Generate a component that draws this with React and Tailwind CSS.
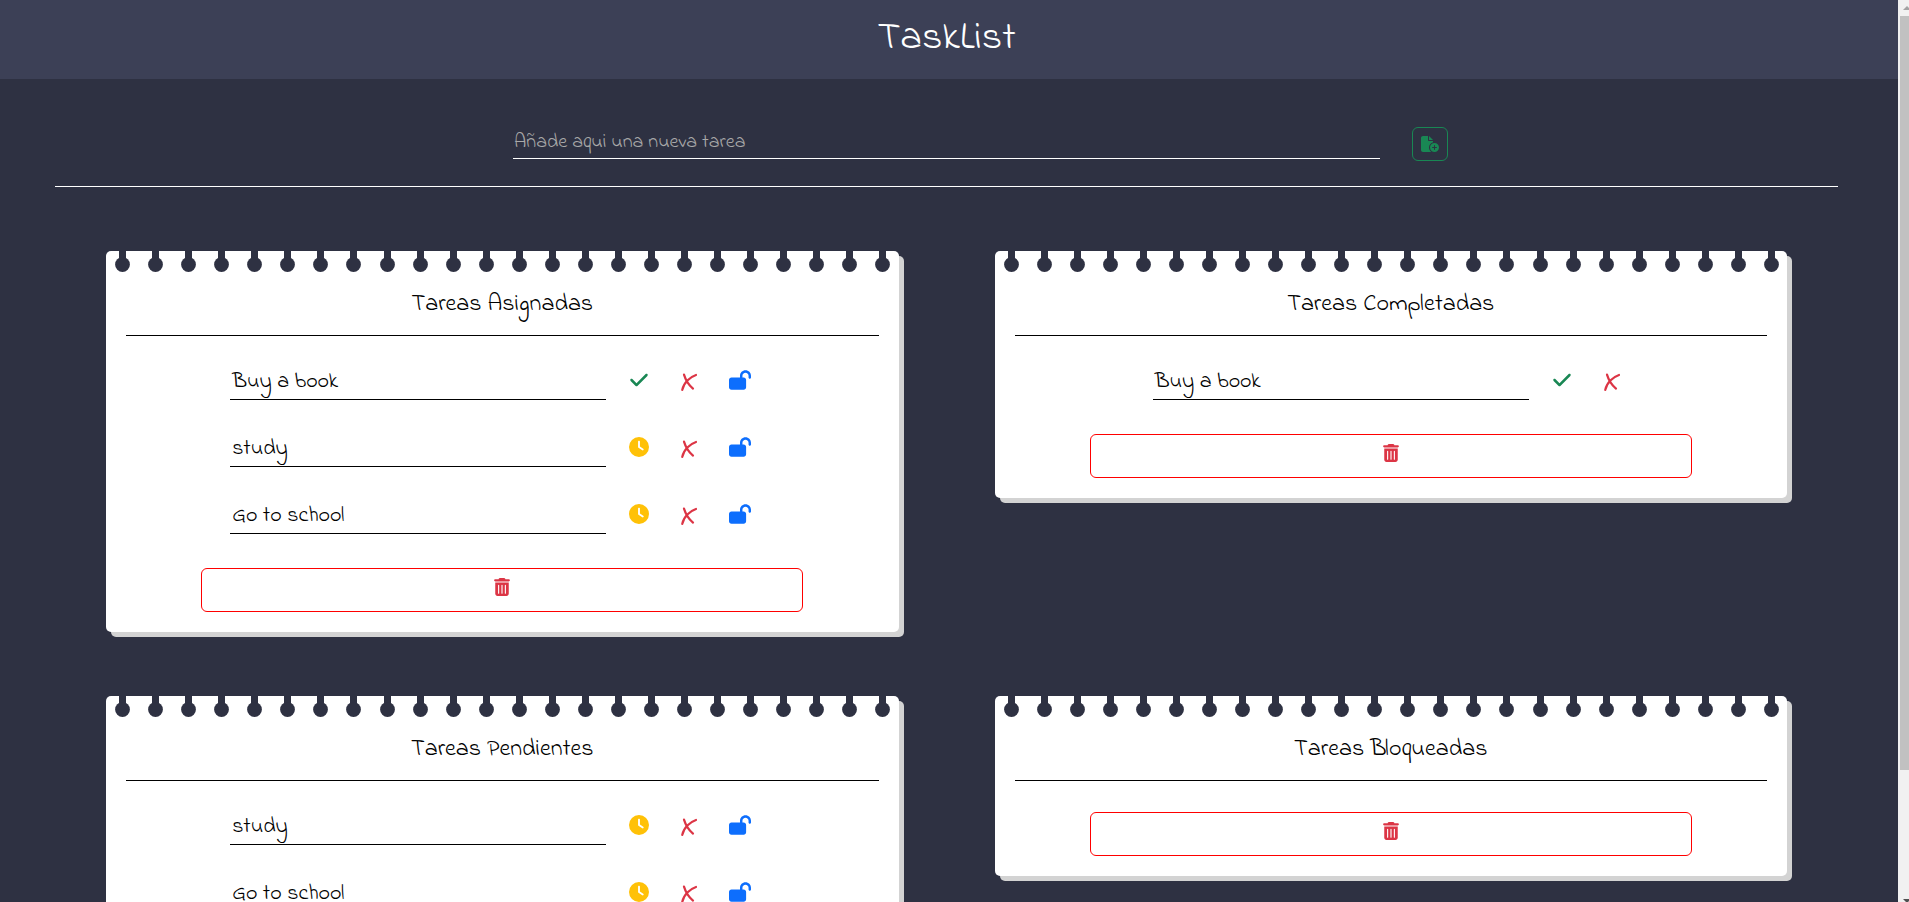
import { useState } from "react";
import {
  FaCheck,
  FaClock,
  FaFileCirclePlus,
  FaLockOpen,
  FaTrashCan,
} from "react-icons/fa6";

const BOARDS = [
  {
    title: "Tareas Asignadas",
    lockable: true,
    tasks: [
      { name: "Buy a book", done: true },
      { name: "study", done: false },
      { name: "Go to school", done: false },
    ],
  },
  {
    title: "Tareas Completadas",
    lockable: false,
    tasks: [{ name: "Buy a book", done: true }],
  },
  {
    title: "Tareas Pendientes",
    lockable: true,
    tasks: [
      { name: "study", done: false },
      { name: "Go to school", done: false },
    ],
  },
  { title: "Tareas Bloqueadas", lockable: true, tasks: [] },
];

const HOLES = Array.from({ length: 24 }, (_, i) => i);

function Hole() {
  return (
    <svg aria-hidden="true" viewBox="0 0 15 21" className="h-[21px] w-[15px] fill-[#2e3142]">
      <rect x="4" y="0" width="7" height="9" />
      <circle cx="7.5" cy="13.5" r="7.4" />
    </svg>
  );
}

function CrossIcon() {
  return (
    <svg
      aria-hidden="true"
      viewBox="0 0 16 18"
      className="mt-1 h-[18px] w-4"
      fill="none"
      stroke="currentColor"
      strokeWidth="2.2"
      strokeLinecap="round"
      strokeLinejoin="round"
    >
      <path d="M3 1.6C4.300 6 8 12.200 12 15.600" />
      <path d="M15 2C9.500 3.800 2.800 9.500 1.300 16.800" />
    </svg>
  );
}

function Task({ task, lockable }) {
  return (
    <li className="flex items-center justify-center pt-7 pb-[3px]">
      <span className="h-9 w-1/2 border-b border-black pt-0.5 pl-0.5 text-[22px] leading-8 text-black">
        {task.name}
      </span>
      <button
        type="button"
        aria-label={task.done ? "Completada" : "Pendiente"}
        className={
          task.done
            ? "flex w-[66px] justify-center pb-1 text-xl text-[#198754]"
            : "flex w-[66px] justify-center pb-1 text-xl text-[#ffc107]"
        }
      >
        {task.done ? <FaCheck /> : <FaClock />}
      </button>
      <button
        type="button"
        aria-label="Eliminar"
        className="flex w-[34px] justify-center pb-1 text-[#dc3545]"
      >
        <CrossIcon />
      </button>
      {lockable && (
        <button
          type="button"
          aria-label="Bloquear"
          className="flex w-[68px] justify-center pb-1 text-[#0d6efd]"
        >
          <FaLockOpen className="h-5 w-[22px]" />
        </button>
      )}
    </li>
  );
}

function Board({ board }) {
  return (
    <section className="rounded-[5px] bg-white px-5 pb-5 shadow-[5px_5px_0_#d3d3d3]">
      <div className="-mr-3 -ml-[11px] flex justify-between">
        {HOLES.map((i) => (
          <Hole key={i} />
        ))}
      </div>
      <h2 className="border-b border-black pt-[17px] pb-[14px] text-center text-2xl leading-8 text-black">
        {board.title}
      </h2>
      <ul>
        {board.tasks.map((task) => (
          <Task key={task.name} task={task} lockable={board.lockable} />
        ))}
      </ul>
      <button
        type="button"
        aria-label={"Vaciar " + board.title}
        className="mx-auto mt-[31px] flex h-11 w-4/5 items-center justify-center rounded-md border border-[#ff0000] pb-1.5 text-lg text-[#dc3545]"
      >
        <FaTrashCan />
      </button>
    </section>
  );
}

function ScrollRail() {
  return (
    <div aria-hidden="true" className="flex w-[11px] shrink-0 flex-col overflow-hidden bg-[#f1f1f1]">
      <svg viewBox="0 0 11 16" className="h-4 w-[11px] shrink-0 fill-[#a3a3a3]">
        <path d="M5 10L9 6L13 10Z" />
      </svg>
      <div className="flex-1 pl-0.5">
        <div className="h-13/15 bg-[#c1c1c1]" />
      </div>
      <svg viewBox="0 0 11 16" className="h-4 w-[11px] shrink-0 fill-[#505050]">
        <path d="M5 13L13 13L9 17Z" />
      </svg>
    </div>
  );
}

export default function App() {
  const [draft, setDraft] = useState("");

  return (
    <div className="flex h-screen bg-[#2e3142] font-['Indie_Flower','Lato',sans-serif]">
      <div className="min-w-0 flex-1 overflow-y-auto [scrollbar-width:none]">
        <header className="flex h-[79px] justify-center bg-[#3c4056] pt-[15px] pr-[5px]">
          <h1 className="text-[40px] leading-12 text-white">TaskList</h1>
        </header>
        <main className="pr-[60px] pb-16 pl-[55px]">
          <form
            className="flex justify-center border-b border-white pt-12 pb-[25px] pl-[68px]"
            onSubmit={(e) => e.preventDefault()}
          >
            <div className="flex w-full max-w-[935px] items-start gap-8">
              <input
                type="text"
                aria-label="Nueva tarea"
                placeholder="Añade aqui una nueva tarea"
                value={draft}
                onChange={(e) => setDraft(e.target.value)}
                className="h-8 min-w-0 flex-1 border-b border-white bg-transparent pl-px text-xl text-white outline-none placeholder:text-[#a9a9a9]"
              />
              <button
                type="submit"
                aria-label="Añadir tarea"
                className="flex h-[34px] w-9 items-center justify-center rounded-md border border-[#198754] text-[#198754]"
              >
                <FaFileCirclePlus className="h-4 w-[18px]" />
              </button>
            </div>
          </form>
          <div className="grid grid-cols-2 items-start gap-x-24 gap-y-16 px-[51px] pt-16">
            {BOARDS.map((board) => (
              <Board key={board.title} board={board} />
            ))}
          </div>
        </main>
      </div>
      <ScrollRail />
    </div>
  );
}
